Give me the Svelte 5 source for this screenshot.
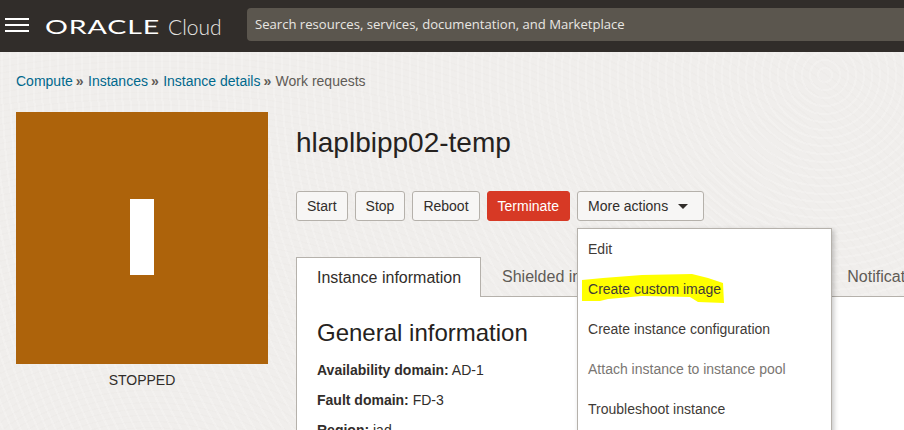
<script>
  const crumbs = ['Compute', 'Instances', 'Instance details'];
  const actions = ['Start', 'Stop', 'Reboot'];
  const menu = [
    { label: 'Edit' },
    { label: 'Create custom image', marked: true },
    { label: 'Create instance configuration' },
    { label: 'Attach instance to instance pool', disabled: true },
    { label: 'Troubleshoot instance' }
  ];
</script>

<div class="page">
  <header class="topbar">
    <button class="burger" aria-label="Menu"><span></span><span></span><span></span></button>
    <div class="brand"><span class="oracle">ORACLE</span><span class="cloud">Cloud</span></div>
    <div class="search">Search resources, services, documentation, and Marketplace</div>
  </header>

  <nav class="crumbs">
    {#each crumbs as c}<a href="#top">{c}</a><span class="sep">»</span>{/each}<span class="current">Work requests</span>
  </nav>

  <main class="content">
    <aside class="side">
      <div class="tile"><span class="bar"></span></div>
      <div class="state">STOPPED</div>
    </aside>

    <section class="detail">
      <h1>hlaplbipp02-temp</h1>
      <div class="actions">
        {#each actions as a}<button class="btn">{a}</button>{/each}
        <button class="btn danger">Terminate</button>
        <div class="more">
          <button class="btn morebtn">More actions <i class="caret"></i></button>
          <ul class="menu">
            {#each menu as m}
              <li class:disabled={m.disabled}>
                {#if m.marked}
                  <svg class="marker" width="150" height="36" viewBox="0 0 150 36" aria-hidden="true">
                    <path d="M4 11 L25 9 L64 6 L114 5 L130 9 L145 14 L146 34 L120 33 L112 28 L64 27 L30 30 L22 32 L4 32 Z" fill="#ffff00" />
                  </svg>
                {/if}
                <span>{m.label}</span>
              </li>
            {/each}
          </ul>
        </div>
      </div>

      <div class="tabs">
        <div class="tab active">Instance information</div>
        <div class="tab shielded">Shielded instance</div>
        <div class="tab last">Notifications</div>
      </div>
      <div class="panel">
        <h2>General information</h2>
        <div class="facts">
          <p><b>Availability domain:</b> AD-1</p>
          <p><b>Fault domain:</b> FD-3</p>
          <p><b>Region:</b> iad</p>
        </div>
      </div>
    </section>
  </main>
</div>

<style>
  :global(body) {
    margin: 0;
    overflow: hidden;
  }
  .page {
    width: 904px;
    height: 430px;
    overflow: hidden;
    font-family: "Liberation Sans", Arial, sans-serif;
    background-color: #f0eeec;
    background-image:
      repeating-radial-gradient(circle at 825px 75px, rgba(255,255,255,0) 0 6px, rgba(255,255,255,.18) 6px 8px),
      repeating-radial-gradient(ellipse at 150px 520px, rgba(228,225,221,0) 0 7px, rgba(228,225,221,.15) 7px 9px);
  }
  .topbar {
    height: 52px;
    background: #312d2a;
    display: flex;
    align-items: center;
    box-sizing: border-box;
    padding: 0 0 3px 5px;
  }
  .burger {
    width: 24px;
    height: 14px;
    padding: 0;
    border: 0;
    background: none;
    display: flex;
    flex-direction: column;
    justify-content: space-between;
    margin-right: 16px;
    flex: none;
  }
  .burger span {
    display: block;
    height: 2px;
    background: #fff;
  }
  .brand {
    width: 202px;
    flex: none;
    display: flex;
    align-items: center;
    margin-top: 3px;
    color: #fff;
    font-family: Lato, "Liberation Sans", sans-serif;
  }
  .oracle {
    font-size: 20px;
    letter-spacing: 0.6px;
    transform: scaleX(1.43);
    transform-origin: left center;
    width: 123px;
    flex: none;
  }
  .cloud {
    font-size: 21px;
    font-weight: 300;
    color: #e8e6e3;
  }
  .search {
    flex: 1;
    height: 33px;
    box-sizing: border-box;
    background: #5b564e;
    border-radius: 4px 0 0 4px;
    color: #e9e7e3;
    font-family: "Open Sans", sans-serif;
    font-size: 13.1px;
    line-height: 33px;
    padding-left: 8px;
  }
  .crumbs {
    height: 16px;
    margin: 21px 0 0 16px;
    font-size: 14px;
    line-height: 16px;
    white-space: nowrap;
  }
  .crumbs a {
    color: #00688c;
    text-decoration: none;
  }
  .sep {
    color: #5f5b56;
    font-weight: bold;
    margin: 0 4.4px 0 3px;
  }
  .current {
    color: #5f5b56;
  }
  .content {
    display: flex;
    margin-top: 23px;
    padding-left: 16px;
  }
  .side {
    width: 252px;
    flex: none;
    margin-right: 28px;
  }
  .tile {
    height: 252px;
    background: #ad630b;
    display: flex;
    align-items: center;
    justify-content: center;
  }
  .bar {
    width: 24px;
    height: 76px;
    background: #fff;
    margin-bottom: 2px;
  }
  .state {
    text-align: center;
    font-size: 14px;
    line-height: 16px;
    margin-top: 8px;
    color: #312d2a;
  }
  .detail {
    flex: 1;
    min-width: 0;
  }
  h1 {
    margin: 14px 0 0;
    font-size: 28px;
    font-weight: 400;
    line-height: 34px;
    color: #252220;
  }
  .actions {
    display: flex;
    gap: 7px;
    margin-top: 31px;
    height: 30px;
  }
  .btn {
    height: 30px;
    box-sizing: border-box;
    padding: 0 10px;
    border: 1px solid #b5b1ab;
    border-radius: 3px;
    background: #f7f6f5;
    color: #312d2a;
    font: 14px "Liberation Sans", Arial, sans-serif;
    white-space: nowrap;
  }
  .danger {
    background: #d73925;
    border-color: #d73925;
    color: #fff;
  }
  .more {
    position: relative;
    z-index: 2;
  }
  .morebtn {
    display: flex;
    align-items: center;
    width: 127px;
  }
  .caret {
    width: 0;
    height: 0;
    border: 5.5px solid transparent;
    border-top-color: #312d2a;
    border-bottom: 0;
    margin-left: 10px;
  }
  .menu {
    position: absolute;
    left: 0;
    top: 37px;
    width: 255px;
    height: 400px;
    box-sizing: border-box;
    margin: 0;
    padding: 0;
    list-style: none;
    background: #fff;
    border: 1px solid #b5b1ab;
    box-shadow: 2px 2px 5px rgba(0, 0, 0, 0.22);
  }
  .menu li {
    position: relative;
    height: 40px;
    line-height: 40px;
    padding-left: 10px;
    font-size: 14px;
    color: #3f3b37;
    white-space: nowrap;
  }
  .menu li span {
    position: relative;
  }
  .menu li.disabled {
    color: #7a7672;
  }
  .marker {
    position: absolute;
    left: 0;
    top: 0;
  }
  .tabs {
    display: flex;
    height: 40px;
    margin-top: 36px;
    box-sizing: border-box;
    border-bottom: 1px solid #b5b1ab;
    white-space: nowrap;
  }
  .tab {
    font-size: 16px;
    line-height: 39px;
    padding: 0 20px;
    color: #5f5b56;
    height: 39px;
  }
  .tab.shielded {
    padding-left: 21px;
  }
  .tab.active {
    height: 40px;
    box-sizing: border-box;
    background: #fff;
    color: #312d2a;
    border: 1px solid #b5b1ab;
    border-bottom: 0;
    line-height: 40px;
    padding: 0 20px;
    width: 185px;
    flex: none;
  }
  .tab.last {
    margin-left: 179px;
  }
  .panel {
    background: #fff;
    border-left: 1px solid #b5b1ab;
    height: 200px;
    padding-left: 20px;
    color: #312d2a;
  }
  h2 {
    margin: 0;
    padding-top: 21px;
    font-size: 24px;
    line-height: 30px;
    font-weight: 400;
    color: #252220;
  }
  .facts {
    margin-top: 7px;
  }
  .facts p {
    margin: 0;
    font-size: 14px;
    line-height: 30px;
  }
</style>
